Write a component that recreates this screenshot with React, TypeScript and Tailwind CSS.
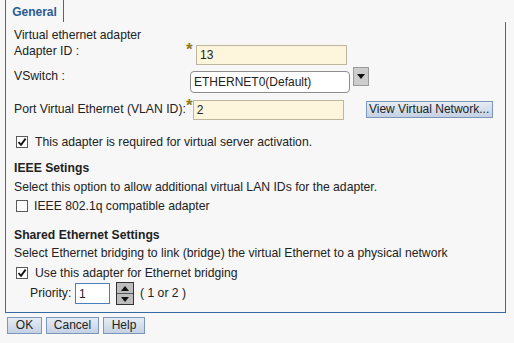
const font = { fontFamily: '"Liberation Sans", Arial, sans-serif' }

function Check({ checked }: { checked: boolean }) {
  return (
    <span className="inline-flex size-[12px] shrink-0 items-center justify-center border border-[#5a5a5a] bg-white">
      {checked && (
        <svg viewBox="0 0 10 10" className="size-[10px]">
          <path d="M1.5 5.2 L4 7.8 L8.6 1.6" fill="none" stroke="#111" strokeWidth="1.8" />
        </svg>
      )}
    </span>
  )
}

function Star() {
  return (
    <span className="h-[14px] w-[10px] text-[17px] leading-[14px] font-bold text-[#8c7a16]">*</span>
  )
}

function Triangle({ up }: { up?: boolean }) {
  return (
    <svg viewBox="0 0 8 5" className="h-[5px] w-[8px]">
      <path d={up ? 'M0 5 L4 0 L8 5 Z' : 'M0 0 L4 5 L8 0 Z'} fill="#111" />
    </svg>
  )
}

const btn =
  'h-[17px] border border-[#7d96bb] bg-gradient-to-b from-[#e6ecf4] to-[#c4d1e3] text-[12px] leading-[15px] text-[#222]'

export default function App() {
  return (
    <div
      className="flex h-[343px] w-[514px] flex-col bg-[#f7f7f7] text-[12.2px] text-[#222]"
      style={font}
    >
      <div className="flex h-[22px]">
        <div className="ml-[5px] flex w-[59px] items-center justify-center border-x border-[#3a6aa3] pt-[1px] text-[12px] font-bold text-[#2a5a93]">
          General
        </div>
        <div className="flex-1" />
      </div>

      <div className="ml-[5px] flex h-[291px] w-[501px] flex-col border-x border-b border-[#3a6aa3] pl-[8px]">
        <div className="mt-[5px] flex h-[16px] items-center">Virtual ethernet adapter</div>

        <div className="flex h-[22px]">
          <div className="w-[172px] leading-[16px]">Adapter ID :</div>
          <Star />
          <input
            readOnly
            value="13"
            className="mt-[2px] h-[20px] w-[151px] border border-[#bdb59c] bg-[#fdf5dc] px-[3px] text-[12px] outline-none"
            style={font}
          />
        </div>

        <div className="flex h-[29px]">
          <div className="mt-[3px] w-[176px] leading-[16px]">VSwitch :</div>
          <div className="mt-[6px] flex h-[22px] w-[160px] items-center rounded-[4px] border border-[#8d8d8d] bg-white px-[3px] text-[12px]">
            ETHERNET0(Default)
          </div>
          <div className="ml-[3px] mt-[2px] flex h-[19px] w-[16px] items-center justify-center border border-[#9a9a9a] bg-[#cdcdcd]">
            <Triangle />
          </div>
        </div>

        <div className="flex h-[26px]">
          <div className="mt-[7px] w-[172px] leading-[16px]">Port Virtual Ethernet (VLAN ID):</div>
          <div className="mt-[4px]">
            <Star />
          </div>
          <input
            readOnly
            value="2"
            className="mt-[6px] h-[20px] w-[151px] border border-[#bdb59c] bg-[#fdf5dc] px-[3px] text-[12px] outline-none"
            style={font}
          />
          <button type="button" className={`ml-[22px] mt-[7px] w-[127px] ${btn}`} style={font}>
            View Virtual Network...
          </button>
        </div>

        <div className="mt-[12px] flex h-[20px] items-center gap-[7px] pl-[2px]">
          <Check checked />
          <span>This adapter is required for virtual server activation.</span>
        </div>

        <div className="mt-[8px] flex h-[16px] items-center font-bold">IEEE Setings</div>
        <div className="mt-[3px] flex h-[16px] items-center">
          Select this option to allow additional virtual LAN IDs for the adapter.
        </div>
        <div className="mt-[3px] flex h-[16px] items-center gap-[6px] pl-[2px]">
          <Check checked={false} />
          <span>IEEE 802.1q compatible adapter</span>
        </div>

        <div className="mt-[13px] flex h-[16px] items-center font-bold">Shared Ethernet Settings</div>
        <div className="mt-[2px] flex h-[16px] items-center">
          Select Ethernet bridging to link (bridge) the virtual Ethernet to a physical network
        </div>
        <div className="mt-[4px] flex h-[16px] items-center gap-[7px] pl-[2px]">
          <Check checked />
          <span>Use this adapter for Ethernet bridging</span>
        </div>

        <div className="mt-[1px] flex h-[23px] items-center pl-[16px]">
          <span className="w-[45px]">Priority:</span>
          <input
            readOnly
            value="1"
            className="h-[21px] w-[35px] border border-[#4a7fc0] bg-white px-[3px] text-[12px] outline-none"
            style={font}
          />
          <div className="ml-[6px] flex h-[23px] w-[18px] flex-col border border-[#333] bg-[#bdbdbd]">
            <div className="flex flex-1 items-center justify-center border-b border-[#555]">
              <Triangle up />
            </div>
            <div className="flex flex-1 items-center justify-center">
              <Triangle />
            </div>
          </div>
          <span className="ml-[6px]">( 1 or 2 )</span>
        </div>
      </div>

      <div className="ml-[7px] mt-[4px] flex gap-[4px]">
        <button type="button" className={`w-[35px] ${btn}`} style={font}>
          OK
        </button>
        <button type="button" className={`w-[53px] ${btn}`} style={font}>
          Cancel
        </button>
        <button type="button" className={`w-[42px] ${btn}`} style={font}>
          Help
        </button>
      </div>
    </div>
  )
}
